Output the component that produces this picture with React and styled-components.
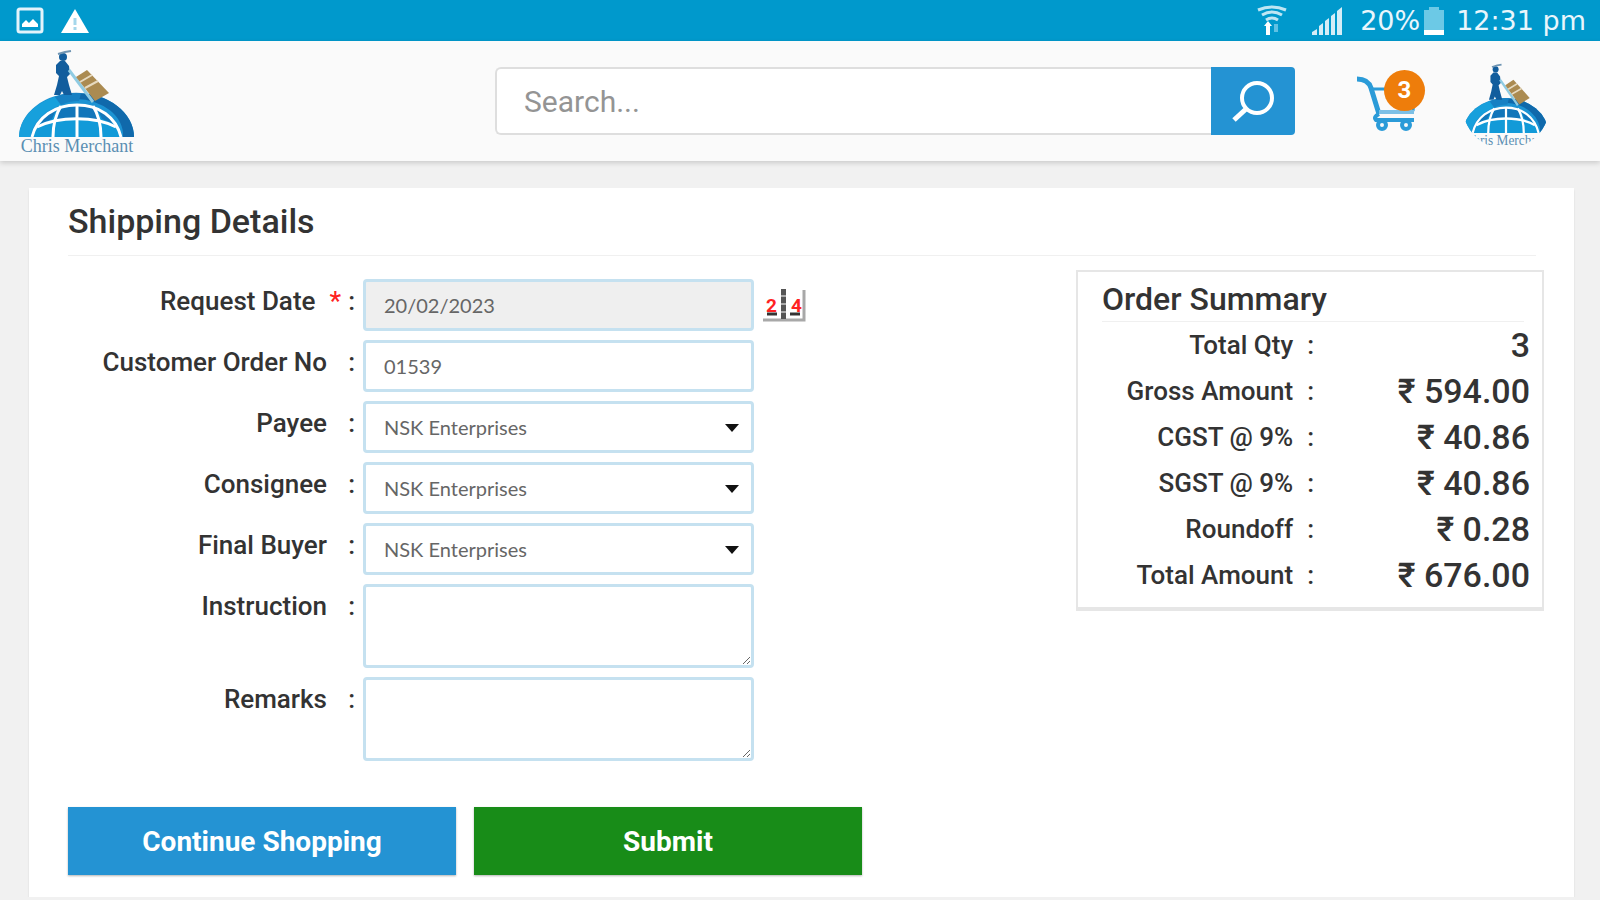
import React, { Component } from 'react'
import styled, { createGlobalStyle } from 'styled-components'

const parties = ['NSK Enterprises']

const summary = [
    { label: 'Total Qty', value: '3' },
    { label: 'Gross Amount', value: '₹ 594.00' },
    { label: 'CGST @ 9%', value: '₹ 40.86' },
    { label: 'SGST @ 9%', value: '₹ 40.86' },
    { label: 'Roundoff', value: '₹ 0.28' },
    { label: 'Total Amount', value: '₹ 676.00' },
]

const GlobalStyle = createGlobalStyle`
* {
  box-sizing: border-box;
}

body {
  margin: 0;
  background: #f1f1f1;
  color: #333;
  font-family: Roboto, "Liberation Sans", sans-serif;
}

button, input, select, textarea {
  font-family: inherit;
  margin: 0;
}
`;

//Man with a hand truck standing on top of the globe
const Globe = () => (
    <g>
        <path d="M0 88 A57.500 44 0 0 1 115 88 Z" fill="#1c93d3" />
        <path d="M57 44 A57.500 44 0 0 1 115 88 L104 88 A48 36 0 0 0 57 50 Z" fill="#1069ab" />
        <path d="M0 88 A57.500 44 0 0 1 36 48 L42 56 A48 40 0 0 0 11 88 Z" fill="#17a0dc" />
        <path d="M36 48 Q47 43 62 44 L60 52 Q50 52 42 56 Z" fill="#1780c3" />
        <path d="M13 88 A45 34 0 0 1 102 88 Z" fill="#129ad8" />
        <path d="M42 58 A45 34 0 0 1 74 58 L79 70 H37 Z" fill="#1276ba" />
        <path d="M38 59 L33 70 L21 75 Q27 65 38 59 Z M78 59 L83 70 L95 75 Q89 65 78 59 Z" fill="#1276ba" />
        <g fill="none" stroke="#fff" strokeWidth="3">
            <path d="M13 88 C18 68 36 56 58 56 C80 56 97 68 102 88" />
            <path d="M58 56 V88" />
            <path d="M42 57 C37 65 34 76 34 88" />
            <path d="M74 57 C79 65 82 76 82 88" />
            <path d="M18 78 C40 67 76 67 97 78" />
        </g>
        <circle cx="44" cy="8" r="4" fill="#125d9d" />
        <path d="M41 12 H46 L50 17 L51 25 L48 28 L50 36 L53 46 H45 L43 42 L41 46 H35 L38 36 L40 27 L37 24 L37 16 Z" fill="#125d9d" />
        <path d="M39 5 L46 3 L52 2" fill="none" stroke="#6f95b3" strokeWidth="2" />
        <path d="M50 21 L74 53" stroke="#8fcbe2" strokeWidth="3" />
        <path d="M57 28 L68 21 L90 44 L76 52 Z" fill="#ab8b51" />
        <path d="M61 33 L73 26 M66 39 L79 32" stroke="#e6dac0" strokeWidth="2" />
    </g>
)

const StatusBar = () => (
    <Status>
        <StatusGroup>
            <svg width="28" height="28" viewBox="0 0 28 28">
                <rect x="2" y="2" width="24" height="23" rx="2" fill="none" stroke="#e3f3fb" strokeWidth="3" />
                <path d="M6 20 V17 L10 13 L13 16 L17 12 L22 17 V20 Z" fill="#fff" />
            </svg>
            <svg width="30" height="28" viewBox="0 0 30 28">
                <path d="M15 2 L29 26 H1 Z" fill="#fff" />
                <path d="M15 11 V18 M15 20 V23" stroke="#a5d7eb" strokeWidth="3" />
            </svg>
        </StatusGroup>
        <StatusGroup $right>
            <svg width="32" height="32" viewBox="0 0 32 32">
                <g fill="none" stroke="#bfe6f3" strokeWidth="3">
                    <path d="M2 5 Q16 -1 30 5" />
                    <path d="M6 10 Q16 4 26 10" />
                    <path d="M10 15 Q16 11 22 15" />
                </g>
                <path d="M10 30 V21 H8 L12 16 L16 21 H14 V30 Z" fill="#fff" />
                <path d="M18 19 H22 V27 H18 Z" fill="#5fc1e3" />
            </svg>
            <Signal width="32" height="30" viewBox="0 0 32 30">
                <path d="M1 29 V26 L6 23 V29 Z M8 29 V20 L12 17 V29 Z M14 29 V15 L18 12 V29 Z M20 29 V10 L24 7 V29 Z M26 29 V5 L31 1 V29 Z" fill="#d5edf7" />
            </Signal>
            <span>20%</span>
            <svg width="22" height="30" viewBox="0 0 22 30">
                <path d="M6 4 V1 H16 V4 H21 V29 H1 V4 Z" fill="#6cc9e6" />
                <path d="M1 24 H21 V29 H1 Z" fill="#fff" />
            </svg>
            <Clock>12:31 pm</Clock>
        </StatusGroup>
    </Status>
)

class Header extends Component {
    render() {
        return (
            <HeaderBar>
                <Brand href="#home" aria-label="Chris Merchant">
                    <svg width="116" height="108" viewBox="0 0 116 108">
                        <Globe />
                        <LogoText x="58" y="103">Chris Merchant</LogoText>
                    </svg>
                </Brand>
                <Search onSubmit={(e) => e.preventDefault()}>
                    <SearchInput type="text" placeholder="Search..." aria-label="Search" />
                    <SearchButton aria-label="Search">
                        <svg width="44" height="44" viewBox="0 0 44 44" fill="none" stroke="#fff">
                            <circle cx="26" cy="19" r="15" strokeWidth="4" />
                            <path d="M15 30 L3 41" strokeWidth="5" />
                        </svg>
                    </SearchButton>
                </Search>
                <Cart href="#cart" aria-label="Cart">
                    <svg width="66" height="56" viewBox="0 0 66 56" fill="none" stroke="#2b9bd8" strokeWidth="4">
                        <path d="M2 3 C10 3 14 6 16 12 L24 38" strokeWidth="5" />
                        <path d="M17 13 H60 L58 35" strokeWidth="3" />
                        <path d="M24 36 H59" stroke="#7cc0e6" />
                        <path d="M24 38 Q18 41 21 44 H59" />
                        <circle cx="27" cy="49" r="4" />
                        <circle cx="51" cy="49" r="4" />
                    </svg>
                    <Badge>3</Badge>
                </Cart>
                <Profile href="#profile" aria-label="Profile">
                    <svg width="86" height="86" viewBox="0 0 116 108" preserveAspectRatio="none">
                        <clipPath id="round">
                            <ellipse cx="58" cy="52" rx="59" ry="56" />
                        </clipPath>
                        <g clipPath="url(#round)">
                            <Globe />
                            <LogoText x="58" y="103">Chris Merchant</LogoText>
                        </g>
                    </svg>
                </Profile>
            </HeaderBar>
        )
    }
}

const Row = ({ id, label, required, children }) => (
    <FormRow>
        <Label htmlFor={id}>
            {label}
            {required && <Star>*</Star>}
            <Colon $tight={required}>:</Colon>
        </Label>
        {children}
    </FormRow>
)

const PartySelect = ({ id }) => (
    <SelectBox>
        <Select id={id}>
            {parties.map((p) => <option key={p}>{p}</option>)}
        </Select>
        <Caret width="14" height="8" viewBox="0 0 14 8">
            <path d="M0 0 H14 L7 8 Z" fill="#111" />
        </Caret>
    </SelectBox>
)

const OrderSummary = () => (
    <SummaryBox>
        <SummaryTitle>Order Summary</SummaryTitle>
        <SummaryTable>
            <tbody>
                {summary.map((row) => (
                    <tr key={row.label}>
                        <SummaryLabel scope="row">{row.label}<SummaryColon>:</SummaryColon></SummaryLabel>
                        <SummaryValue>{row.value}</SummaryValue>
                    </tr>
                ))}
            </tbody>
        </SummaryTable>
    </SummaryBox>
)

class App extends Component {
    render() {
        return (
            <>
                <GlobalStyle />
                <StatusBar />
                <Header />
                <Card>
                    <Title>Shipping Details</Title>
                    <Columns>
                        <Fields id="shipping" onSubmit={(e) => e.preventDefault()}>
                            <Row id="date" label="Request Date" required>
                                <Input id="date" type="text" defaultValue="20/02/2023" readOnly $filled />
                                <DateButton type="button" aria-label="Pick a date">
                                    <svg width="44" height="34" viewBox="0 0 44 34">
                                        <path d="M42 2 V32 H1" fill="none" stroke="#a8a8a8" strokeWidth="3" />
                                        <path d="M19 1 H24 V31 H19 Z" fill="#555" />
                                        <path d="M19 8 H24 M19 16 H24 M19 24 H24" stroke="#aaa" strokeWidth="2" />
                                        <path d="M5 26 H15 M28 26 H38" stroke="#333" strokeWidth="3" />
                                        <DateDigit x="4" y="24">2</DateDigit>
                                        <DateDigit x="29" y="24">4</DateDigit>
                                    </svg>
                                </DateButton>
                            </Row>
                            <Row id="order" label="Customer Order No">
                                <Input id="order" type="text" defaultValue="01539" />
                            </Row>
                            <Row id="payee" label="Payee"><PartySelect id="payee" /></Row>
                            <Row id="consignee" label="Consignee"><PartySelect id="consignee" /></Row>
                            <Row id="buyer" label="Final Buyer"><PartySelect id="buyer" /></Row>
                            <Row id="instruction" label="Instruction"><TextArea id="instruction" /></Row>
                            <Row id="remarks" label="Remarks"><TextArea id="remarks" /></Row>
                        </Fields>
                        <OrderSummary />
                    </Columns>
                    <Actions>
                        <ActionButton type="button">Continue Shopping</ActionButton>
                        <ActionButton form="shipping" $green>Submit</ActionButton>
                    </Actions>
                </Card>
            </>
        )
    }
}

export default App

//Android status bar
const Status = styled.div`
display: flex;
justify-content: space-between;
align-items: center;
height: 41px;
padding: 0 14px 0 16px;
background: #0099cc;
color: #e9f6fc;
font-family: "DejaVu Sans", sans-serif;
font-size: 27px;
`;

const StatusGroup = styled.div`
display: flex;
align-items: center;
gap: ${(props) => (props.$right ? '3px' : '16px')};
`;

const Signal = styled.svg`
margin: 0 14px 0 20px;
`;

const Clock = styled.span`
margin-left: 8px;
`;

//Header
const HeaderBar = styled.header`
display: flex;
align-items: center;
height: 120px;
padding: 0 51px 0 19px;
background: #fafafa;
box-shadow: 0 2px 5px rgba(0, 0, 0, 0.16);
`;

const Brand = styled.a`
display: flex;
flex: 1;
padding-top: 4px;
`;

const LogoText = styled.text`
font-family: "Liberation Serif", serif;
font-size: 18px;
text-anchor: middle;
fill: #5a8fb3;
`;

const Search = styled.form`
display: flex;
width: 50vw;
height: 68px;
`;

const SearchInput = styled.input`
flex: 1;
min-width: 0;
padding: 0 27px;
border: 2px solid #dedede;
border-right: 0;
border-radius: 6px 0 0 6px;
background: #fff;
font-size: 30px;

&::placeholder {
  color: #949494;
  opacity: 1;
}
`;

const SearchButton = styled.button`
display: flex;
align-items: center;
justify-content: center;
width: 84px;
border: 0;
border-radius: 0 4px 4px 0;
background: #2493d3;
cursor: pointer;
`;

const Cart = styled.a`
position: relative;
display: flex;
align-items: flex-end;
width: 70px;
height: 62px;
margin: 0 38px 0 60px;
`;

const Badge = styled.span`
position: absolute;
top: 0;
right: 0;
width: 41px;
height: 41px;
border-radius: 50%;
background: #ee7d0b;
color: #fff;
font-size: 24px;
font-weight: 700;
line-height: 41px;
text-align: center;
`;

const Profile = styled.a`
display: flex;
padding-top: 10px;
`;

//White card with the form
const Card = styled.main`
margin: 27px 26px 0 29px;
padding: 12px 30px 22px 39px;
background: #fff;
box-shadow: 0 2px 2px rgba(0, 0, 0, 0.1);
`;

const Title = styled.h1`
margin: 0 8px 0 0;
padding-bottom: 12px;
border-bottom: 1px solid #f0f0f0;
font-size: 34px;
font-weight: 500;
line-height: 43px;
`;

const Columns = styled.div`
display: flex;
justify-content: space-between;
align-items: flex-start;
padding-top: 14px;
`;

const Fields = styled.form`
display: grid;
gap: 9px;
padding-top: 9px;
`;

const FormRow = styled.div`
display: grid;
grid-template-columns: 287px 391px auto;
column-gap: 8px;
align-items: start;
justify-content: start;
`;

const Label = styled.label`
display: flex;
justify-content: flex-end;
padding-top: 7px;
font-size: 26px;
font-weight: 500;
line-height: 30px;
`;

const Star = styled.span`
margin-left: 14px;
color: #f22;
`;

const Colon = styled.span`
width: ${(props) => (props.$tight ? '14px' : '28px')};
text-align: right;
`;

const Input = styled.input`
width: 100%;
height: 52px;
padding: 0 18px;
border: 3px solid #c5e1f0;
border-radius: 4px;
background: ${(props) => (props.$filled ? '#efefef' : '#fff')};
color: #666;
font-family: Lato, sans-serif;
font-size: 20px;
`;

const SelectBox = styled.div`
position: relative;
`;

const Select = styled(Input).attrs({ as: 'select' })`
display: block;
appearance: none;
`;

const Caret = styled.svg`
position: absolute;
top: 23px;
right: 15px;
pointer-events: none;
`;

const TextArea = styled(Input).attrs({ as: 'textarea' })`
display: block;
height: 84px;
resize: vertical;
`;

const DateButton = styled.button`
display: flex;
align-self: center;
padding: 0;
border: 0;
background: none;
cursor: pointer;
`;

const DateDigit = styled.text`
font-size: 19px;
font-weight: 700;
fill: #f22;
`;

//Order summary
const SummaryBox = styled.section`
width: 468px;
padding: 8px 12px 9px 24px;
border: 2px solid #e6e6e6;
border-bottom-width: 4px;
`;

const SummaryTitle = styled.h2`
margin: 0 6px 0 0;
padding-bottom: 3px;
border-bottom: 1px solid #f0f0f0;
font-size: 32px;
font-weight: 500;
line-height: 38px;
`;

const SummaryTable = styled.table`
width: 100%;
border-collapse: collapse;

tr {
  height: 46px;
}
`;

const SummaryLabel = styled.th`
width: 212px;
padding: 0;
font-size: 26px;
font-weight: 500;
line-height: 30px;
text-align: right;
white-space: nowrap;
`;

const SummaryColon = styled.span`
margin-left: 14px;
`;

const SummaryValue = styled.td`
padding: 0;
font-size: 34px;
font-weight: 500;
line-height: 36px;
text-align: right;
`;

//Buttons below the form
const Actions = styled.div`
display: flex;
gap: 18px;
margin-top: 46px;
`;

const ActionButton = styled.button`
width: 388px;
height: 68px;
border: 0;
background: ${(props) => (props.$green ? '#188c18' : '#2493d3')};
color: #fff;
font-size: 28px;
font-weight: 700;
box-shadow: 0 1px 2px rgba(0, 0, 0, 0.3);
cursor: pointer;
`;
